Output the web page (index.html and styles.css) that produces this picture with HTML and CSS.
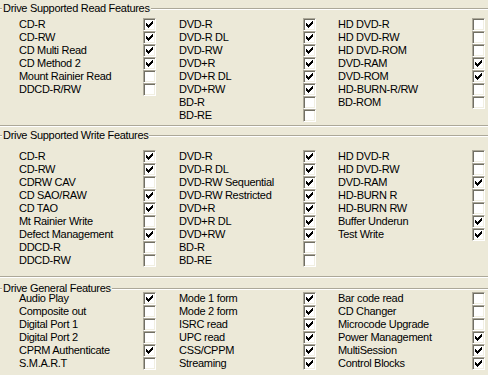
FILE: index.html
```html
<!DOCTYPE html>
<html lang="en">
<head>
    <meta charset="UTF-8">
    <title>Drive Features</title>
    <link rel="stylesheet" href="styles.css">
</head>
<body>
    <svg class="defs" width="0" height="0">
        <symbol id="tick" viewBox="0 0 7 7">
            <path d="M0 2h1v3h-1zM1 3h1v3h-1zM2 4h1v3h-1zM3 3h1v3h-1zM4 2h1v3h-1zM5 1h1v3h-1zM6 0h1v3h-1z"/>
        </symbol>
    </svg>

    <fieldset class="group group-read">
        <legend>Drive Supported Read Features</legend>
        <div class="cols">
            <div class="col col-a">
                <div class="row"><span class="name">CD-R</span><span class="box on"><svg><use href="#tick"/></svg></span></div>
                <div class="row"><span class="name">CD-RW</span><span class="box on"><svg><use href="#tick"/></svg></span></div>
                <div class="row"><span class="name">CD Multi Read</span><span class="box on"><svg><use href="#tick"/></svg></span></div>
                <div class="row"><span class="name">CD Method 2</span><span class="box on"><svg><use href="#tick"/></svg></span></div>
                <div class="row"><span class="name">Mount Rainier Read</span><span class="box"></span></div>
                <div class="row"><span class="name">DDCD-R/RW</span><span class="box"></span></div>
            </div>
            <div class="col col-b">
                <div class="row"><span class="name">DVD-R</span><span class="box on"><svg><use href="#tick"/></svg></span></div>
                <div class="row"><span class="name">DVD-R DL</span><span class="box on"><svg><use href="#tick"/></svg></span></div>
                <div class="row"><span class="name">DVD-RW</span><span class="box on"><svg><use href="#tick"/></svg></span></div>
                <div class="row"><span class="name">DVD+R</span><span class="box on"><svg><use href="#tick"/></svg></span></div>
                <div class="row"><span class="name">DVD+R DL</span><span class="box on"><svg><use href="#tick"/></svg></span></div>
                <div class="row"><span class="name">DVD+RW</span><span class="box on"><svg><use href="#tick"/></svg></span></div>
                <div class="row"><span class="name">BD-R</span><span class="box"></span></div>
                <div class="row"><span class="name">BD-RE</span><span class="box"></span></div>
            </div>
            <div class="col col-c">
                <div class="row"><span class="name">HD DVD-R</span><span class="box"></span></div>
                <div class="row"><span class="name">HD DVD-RW</span><span class="box"></span></div>
                <div class="row"><span class="name">HD DVD-ROM</span><span class="box"></span></div>
                <div class="row"><span class="name">DVD-RAM</span><span class="box on"><svg><use href="#tick"/></svg></span></div>
                <div class="row"><span class="name">DVD-ROM</span><span class="box on"><svg><use href="#tick"/></svg></span></div>
                <div class="row"><span class="name">HD-BURN-R/RW</span><span class="box"></span></div>
                <div class="row"><span class="name">BD-ROM</span><span class="box"></span></div>
            </div>
        </div>
    </fieldset>

    <fieldset class="group group-write">
        <legend>Drive Supported Write Features</legend>
        <div class="cols">
            <div class="col col-a">
                <div class="row"><span class="name">CD-R</span><span class="box on"><svg><use href="#tick"/></svg></span></div>
                <div class="row"><span class="name">CD-RW</span><span class="box on"><svg><use href="#tick"/></svg></span></div>
                <div class="row"><span class="name">CDRW CAV</span><span class="box"></span></div>
                <div class="row"><span class="name">CD SAO/RAW</span><span class="box on"><svg><use href="#tick"/></svg></span></div>
                <div class="row"><span class="name">CD TAO</span><span class="box on"><svg><use href="#tick"/></svg></span></div>
                <div class="row"><span class="name">Mt Rainier Write</span><span class="box"></span></div>
                <div class="row"><span class="name">Defect Management</span><span class="box on"><svg><use href="#tick"/></svg></span></div>
                <div class="row"><span class="name">DDCD-R</span><span class="box"></span></div>
                <div class="row"><span class="name">DDCD-RW</span><span class="box"></span></div>
            </div>
            <div class="col col-b">
                <div class="row"><span class="name">DVD-R</span><span class="box on"><svg><use href="#tick"/></svg></span></div>
                <div class="row"><span class="name">DVD-R DL</span><span class="box on"><svg><use href="#tick"/></svg></span></div>
                <div class="row"><span class="name">DVD-RW Sequential</span><span class="box on"><svg><use href="#tick"/></svg></span></div>
                <div class="row"><span class="name">DVD-RW Restricted</span><span class="box on"><svg><use href="#tick"/></svg></span></div>
                <div class="row"><span class="name">DVD+R</span><span class="box on"><svg><use href="#tick"/></svg></span></div>
                <div class="row"><span class="name">DVD+R DL</span><span class="box on"><svg><use href="#tick"/></svg></span></div>
                <div class="row"><span class="name">DVD+RW</span><span class="box on"><svg><use href="#tick"/></svg></span></div>
                <div class="row"><span class="name">BD-R</span><span class="box"></span></div>
                <div class="row"><span class="name">BD-RE</span><span class="box"></span></div>
            </div>
            <div class="col col-c">
                <div class="row"><span class="name">HD DVD-R</span><span class="box"></span></div>
                <div class="row"><span class="name">HD DVD-RW</span><span class="box"></span></div>
                <div class="row"><span class="name">DVD-RAM</span><span class="box on"><svg><use href="#tick"/></svg></span></div>
                <div class="row"><span class="name">HD-BURN R</span><span class="box"></span></div>
                <div class="row"><span class="name">HD-BURN RW</span><span class="box"></span></div>
                <div class="row"><span class="name">Buffer Underun</span><span class="box on"><svg><use href="#tick"/></svg></span></div>
                <div class="row"><span class="name">Test Write</span><span class="box on"><svg><use href="#tick"/></svg></span></div>
            </div>
        </div>
    </fieldset>

    <fieldset class="group group-general">
        <legend>Drive General Features</legend>
        <div class="cols">
            <div class="col col-a">
                <div class="row"><span class="name">Audio Play</span><span class="box on"><svg><use href="#tick"/></svg></span></div>
                <div class="row"><span class="name">Composite out</span><span class="box"></span></div>
                <div class="row"><span class="name">Digital Port 1</span><span class="box"></span></div>
                <div class="row"><span class="name">Digital Port 2</span><span class="box"></span></div>
                <div class="row"><span class="name">CPRM Authenticate</span><span class="box on"><svg><use href="#tick"/></svg></span></div>
                <div class="row"><span class="name">S.M.A.R.T</span><span class="box"></span></div>
            </div>
            <div class="col col-b">
                <div class="row"><span class="name">Mode 1 form</span><span class="box on"><svg><use href="#tick"/></svg></span></div>
                <div class="row"><span class="name">Mode 2 form</span><span class="box on"><svg><use href="#tick"/></svg></span></div>
                <div class="row"><span class="name">ISRC read</span><span class="box on"><svg><use href="#tick"/></svg></span></div>
                <div class="row"><span class="name">UPC read</span><span class="box on"><svg><use href="#tick"/></svg></span></div>
                <div class="row"><span class="name">CSS/CPPM</span><span class="box on"><svg><use href="#tick"/></svg></span></div>
                <div class="row"><span class="name">Streaming</span><span class="box on"><svg><use href="#tick"/></svg></span></div>
            </div>
            <div class="col col-c">
                <div class="row"><span class="name">Bar code read</span><span class="box"></span></div>
                <div class="row"><span class="name">CD Changer</span><span class="box"></span></div>
                <div class="row"><span class="name">Microcode Upgrade</span><span class="box"></span></div>
                <div class="row"><span class="name">Power Management</span><span class="box on"><svg><use href="#tick"/></svg></span></div>
                <div class="row"><span class="name">MultiSession</span><span class="box on"><svg><use href="#tick"/></svg></span></div>
                <div class="row"><span class="name">Control Blocks</span><span class="box on"><svg><use href="#tick"/></svg></span></div>
            </div>
        </div>
    </fieldset>
</body>
</html>
```

FILE: styles.css
```css
html, body {
    margin: 0;
    padding: 0;
    height: 100%;
    overflow: hidden;
}
body {
    background: #ece9d8;
    color: #000;
    font-family: "Liberation Sans", Arial, sans-serif;
    font-size: 11px;
    letter-spacing: -0.3px;
    padding-top: 1px;
}
.defs {
    position: absolute;
}

/* etched group box, left and right edges sit off screen */
.group {
    margin: 0 -20px 0 -6px;
    padding: 0;
    border: 1px solid #aca899;
    box-shadow: 1px 1px 0 #fff, inset 1px 1px 0 #fff;
    min-width: 0;
}
.group legend {
    margin-left: 7px;
    padding: 0 1px;
    line-height: 14px;
    background: #ece9d8;
}
.cols {
    display: flex;
    padding-left: 24px;
}
.group-read .cols {
    padding-top: 3px;
    padding-bottom: 3px;
}
.group-write {
    margin-top: 2px;
}
.group-write .cols {
    padding-top: 8px;
    padding-bottom: 9px;
}
.group-general {
    margin-top: 7px;
}
.group-general legend {
    line-height: 8px;
}
.group-general .cols {
    padding-bottom: 12px;
}

.col-a {
    width: 160px;
}
.col-b {
    width: 159px;
}
.col-c {
    flex: 1;
}
.row {
    display: flex;
    height: 13px;
    align-items: center;
}
.name {
    width: 124px;
    white-space: nowrap;
    line-height: 13px;
}
.col-c .name {
    width: 134px;
}

/* classic sunken checkbox */
.box {
    box-sizing: border-box;
    width: 13px;
    height: 13px;
    border: 1px solid;
    border-color: #aca899 #fff #fff #aca899;
    box-shadow: inset 1px 1px 0 #716f64, inset -1px -1px 0 #f1efe2;
    background: #fff;
    padding: 2px;
}
.box svg {
    display: block;
    width: 7px;
    height: 7px;
    fill: #000;
    shape-rendering: crispEdges;
}
```
